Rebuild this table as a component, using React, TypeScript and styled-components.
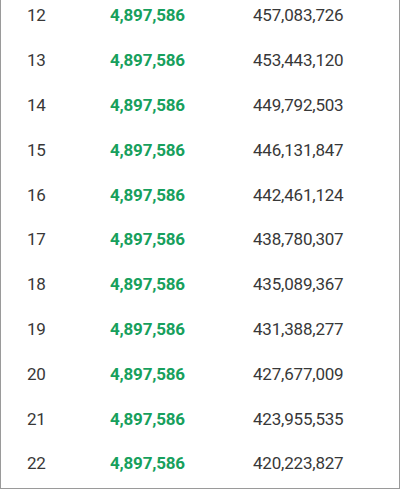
import styled, { createGlobalStyle } from 'styled-components';

const GlobalStyle = createGlobalStyle`
  html, body {
    margin: 0;
    padding: 0;
    background: #fff;
    overflow: hidden;
  }
  body {
    font-family: Roboto, 'Liberation Sans', sans-serif;
  }
`;

const Frame = styled.div`
  width: 398px;
  height: 488px;
  border: 1px solid #9a9a9a;
  border-top: none;
  overflow: hidden;
  background: #fff;
`;

const List = styled.div`
  margin-top: -7px;
  display: flex;
  flex-direction: column;
`;

const Row = styled.div`
  display: grid;
  grid-template-columns: 83px 143px 1fr;
  align-items: center;
  height: 44.8px;
  padding-left: 26px;
  font-size: 17px;
  letter-spacing: -0.2px;
  color: #383838;
`;

const Cell = styled.div<{ $accent?: boolean }>`
  font-weight: ${(p) => (p.$accent ? 700 : 400)};
  color: ${(p) => (p.$accent ? '#17a05d' : '#383838')};
  white-space: nowrap;
`;

const rows = [
  [12, '457,083,726'],
  [13, '453,443,120'],
  [14, '449,792,503'],
  [15, '446,131,847'],
  [16, '442,461,124'],
  [17, '438,780,307'],
  [18, '435,089,367'],
  [19, '431,388,277'],
  [20, '427,677,009'],
  [21, '423,955,535'],
  [22, '420,223,827'],
] as const;

export default function App() {
  return (
    <>
      <GlobalStyle />
      <Frame>
        <List>
          {rows.map(([n, balance]) => (
            <Row key={n}>
              <Cell>{n}</Cell>
              <Cell $accent>4,897,586</Cell>
              <Cell>{balance}</Cell>
            </Row>
          ))}
        </List>
      </Frame>
    </>
  );
}
